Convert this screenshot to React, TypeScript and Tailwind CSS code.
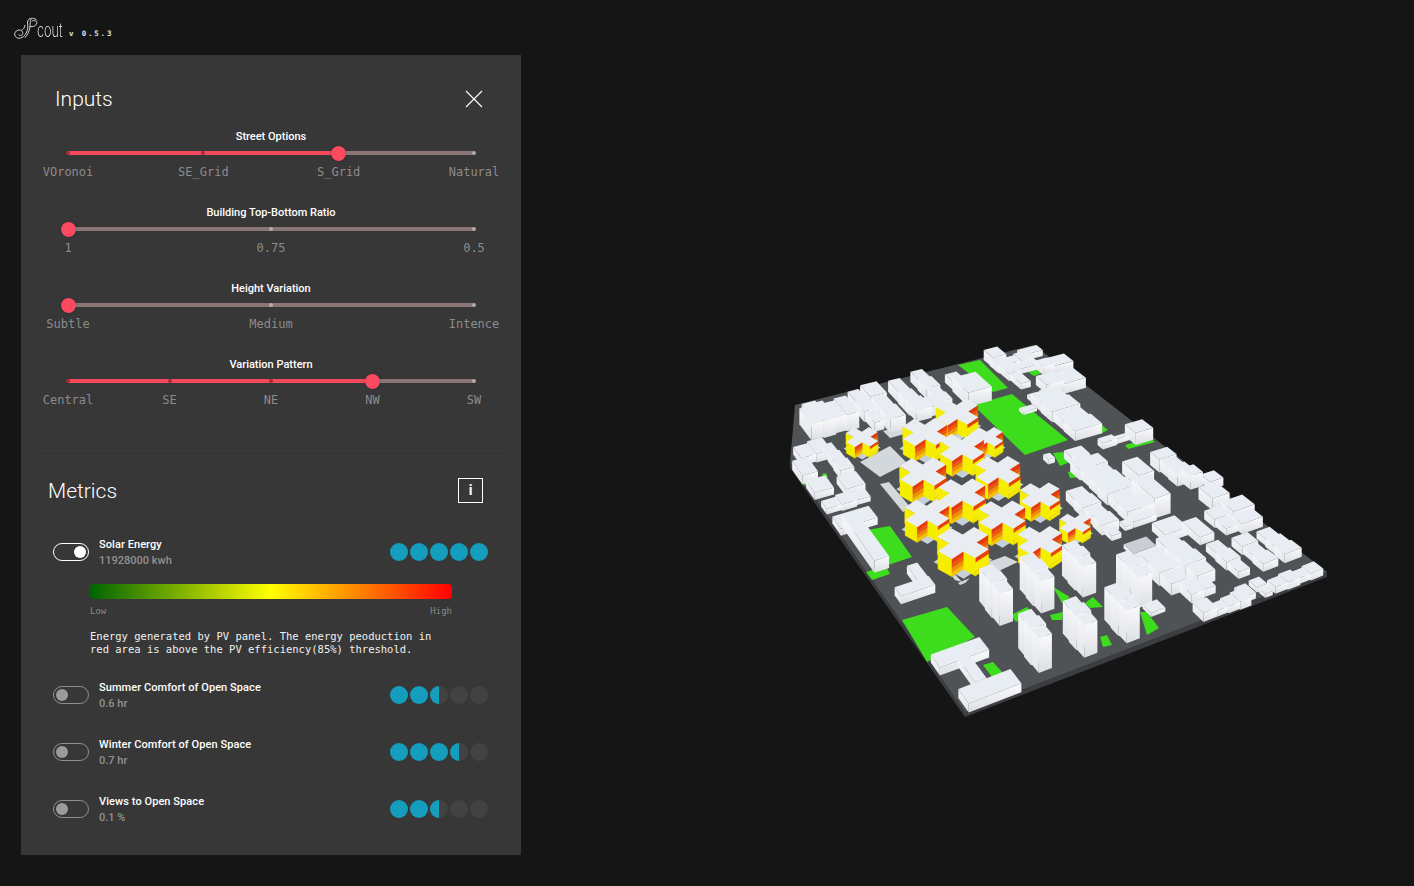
import type { ReactNode } from "react";

// ---------- map projection ----------
type Pt = [number, number];

// corners of the ground plane on screen (u along back edge, v along side edge)
const [P0, P1, P2, P3]: Pt[] = [[757, 414], [1034, 345], [1327, 572], [965, 712]];
const sx = P0[0] - P1[0] + P2[0] - P3[0];
const sy = P0[1] - P1[1] + P2[1] - P3[1];
const dx1 = P1[0] - P2[0];
const dx2 = P3[0] - P2[0];
const dy1 = P1[1] - P2[1];
const dy2 = P3[1] - P2[1];
const den = dx1 * dy2 - dx2 * dy1;
const G = (sx * dy2 - dx2 * sy) / den;
const H = (dx1 * sy - sx * dy1) / den;
const A = P1[0] - P0[0] + G * P1[0];
const B = P3[0] - P0[0] + H * P3[0];
const D = P1[1] - P0[1] + G * P1[1];
const E = P3[1] - P0[1] + H * P3[1];

const project = (u: number, v: number): Pt => {
  const w = G * u + H * v + 1;
  return [(A * u + B * v + P0[0]) / w, (D * u + E * v + P0[1]) / w];
};

const unproject = (x: number, y: number): Pt => {
  const a = A - G * x;
  const b = B - H * x;
  const c = D - G * y;
  const d = E - H * y;
  const r1 = x - P0[0];
  const r2 = y - P0[1];
  const det = a * d - b * c;
  return [(r1 * d - b * r2) / det, (a * r2 - r1 * c) / det];
};

const pxPerU = (u: number, v: number) => {
  const p = project(u, v);
  const q = project(u + 0.01, v);
  return Math.hypot(q[0] - p[0], q[1] - p[1]) * 100;
};
const pxPerV = (u: number, v: number) => {
  const p = project(u, v);
  const q = project(u, v + 0.01);
  return Math.hypot(q[0] - p[0], q[1] - p[1]) * 100;
};

const pts = (list: Pt[]) => list.map((p) => `${p[0].toFixed(1)},${p[1].toFixed(1)}`).join(" ");

// ---------- map data (screen position of the roof centre, then size in px) ----------
const GREENS: number[][] = [
  [973, 405, 1012, 394, 1068, 440, 1025, 455],
  [958, 365, 980, 360, 1008, 388, 993, 392],
  [867, 530, 890, 526, 912, 557, 888, 565],
  [866, 572, 886, 566, 890, 574, 872, 580],
  [902, 620, 947, 607, 975, 637, 927, 662],
  [983, 665, 993, 662, 1003, 673, 992, 677],
  [1011, 615, 1027, 607, 1032, 612, 1016, 622],
  [1050, 615, 1063, 612, 1062, 620, 1052, 620],
  [1085, 603, 1093, 597, 1103, 607, 1090, 608],
  [1140, 612, 1147, 612, 1159, 628, 1147, 635],
  [1100, 637, 1107, 635, 1112, 645, 1103, 647],
  [1053, 587, 1070, 597, 1062, 603],
  [1125, 445, 1150, 438, 1155, 442, 1128, 449],
  [1090, 424, 1098, 422, 1108, 430, 1100, 434],
  [1053, 453, 1063, 452, 1070, 462, 1060, 466],
  [1068, 472, 1083, 468, 1083, 477, 1070, 478],
  [801, 481, 812, 476, 815, 482, 805, 486],
  [822, 474, 826, 473, 828, 477, 824, 478],
  [1028, 372, 1042, 367, 1047, 371, 1034, 376],
];

const PLOTS: number[][] = [
  [860, 462, 890, 446, 907, 463, 880, 477],
  [880, 484, 889, 482, 911, 508, 903, 512],
  [883, 431, 905, 425, 912, 432, 890, 438],
  [938, 559, 943, 561, 962, 582, 955, 580],
  [958, 583, 970, 578, 965, 583, 960, 585],
  [980, 565, 1005, 556, 1018, 562, 990, 575],
];

const CROSSES: number[][] = [
  [862, 437, 0.72],
  [957, 412, 0.95],
  [925, 432, 1],
  [987, 437, 0.72],
  [962, 447, 1],
  [923, 472, 1.05],
  [998, 470, 1],
  [962, 493, 1.05],
  [1040, 495, 0.9],
  [927, 513, 1],
  [1002, 515, 1.05],
  [963, 543, 1.15],
  [1040, 540, 1],
  [1075, 523, 0.7],
];

// x, y, w, d, h - long lumpy rows get cut into chunks unless the last flag is set
const BLOCKS: number[][] = [
  [829, 410, 48, 20, 16],
  [812, 407, 14, 12, 14],
  [866, 405, 12, 40, 10],
  [883, 400, 16, 44, 14],
  [905, 390, 14, 32, 12],
  [929, 383, 12, 36, 10],
  [926, 402, 30, 14, 10],
  [944, 396, 10, 10, 8],
  [972, 382, 24, 22, 14],
  [955, 377, 12, 12, 8],
  [995, 352, 14, 12, 10],
  [1012, 359, 36, 10, 6],
  [1027, 364, 22, 8, 5],
  [1015, 372, 12, 28, 7],
  [1030, 350, 20, 8, 6],
  [1045, 362, 12, 10, 8],
  [1058, 360, 22, 12, 8],
  [1050, 378, 18, 14, 9],
  [1068, 376, 24, 16, 10],
  [1028, 408, 14, 6, 3],
  [1034, 396, 8, 8, 4],
  [1048, 392, 10, 10, 6],
  [1066, 408, 28, 58, 10],
  [1114, 437, 28, 6, 6],
  [1139, 426, 18, 14, 12],
  [1077, 452, 18, 12, 8],
  [1084, 458, 12, 16, 8],
  [1049, 456, 7, 7, 5],
  [1112, 482, 28, 76, 10],
  [1138, 466, 16, 22, 12, 1],
  [1151, 486, 17, 30, 20, 1],
  [1172, 461, 16, 34, 12],
  [1192, 470, 13, 12, 14],
  [1212, 476, 14, 12, 8],
  [1214, 490, 18, 18, 12],
  [1238, 503, 22, 16, 10],
  [1247, 516, 22, 14, 10],
  [1092, 505, 18, 50, 10],
  [1142, 515, 24, 9, 6],
  [1126, 523, 8, 8, 4],
  [1113, 531, 10, 10, 5],
  [1170, 525, 24, 18, 8],
  [1198, 527, 15, 24, 8],
  [1222, 517, 15, 26, 8],
  [1185, 553, 20, 56, 12],
  [1164, 565, 20, 44, 12],
  [1198, 585, 26, 15, 8],
  [1228, 555, 14, 42, 8],
  [1255, 548, 16, 40, 8],
  [1278, 540, 16, 38, 8],
  [1258, 582, 11, 11, 5],
  [1266, 590, 8, 8, 4],
  [1295, 574, 50, 12, 7],
  [1205, 605, 15, 15, 9],
  [1230, 600, 34, 12, 7],
  [1245, 590, 12, 14, 6],
  [1154, 606, 15, 12, 4],
  [812, 448, 30, 15, 8],
  [805, 466, 16, 18, 9],
  [837, 456, 12, 34, 8],
  [851, 480, 20, 16, 7],
  [820, 484, 20, 15, 7],
  [846, 498, 45, 11, 6],
  [855, 517, 38, 15, 7, 1],
  [865, 535, 15, 56, 12, 1],
  [918, 572, 11, 20, 8, 1],
  [915, 586, 36, 11, 8, 1],
  [960, 652, 52, 16, 8, 1],
  [972, 668, 12, 30, 8, 1],
  [990, 686, 56, 18, 9, 1],
];

// ribbed high-rises: x, y, w, d, h
const TOWERS: number[][] = [
  [996, 577, 16, 32, 34],
  [1037, 565, 16, 32, 34],
  [1035, 622, 16, 32, 36],
  [1080, 609, 16, 32, 34],
  [1079, 552, 16, 30, 32],
  [1122, 595, 16, 32, 34],
  [1134, 562, 16, 32, 32],
];

const LOW_BLOCK: number[] = [1140, 545, 24, 14, 4, 1];

// ---------- prism drawing ----------
type WallPaint = (nu: number, nv: number, au: number, av: number) => string[];

// footprint in local axes, clockwise; only the -a and +b faces turn to the camera
function prism(toScreen: (a: number, b: number) => Pt, fp: Pt[], h: number, roof: string, paint: WallPaint, key: string): ReactNode {
  const walls: { y: number; node: ReactNode }[] = [];
  fp.forEach((a, i) => {
    const b = fp[(i + 1) % fp.length];
    const nu = Math.sign(b[1] - a[1]);
    const nv = -Math.sign(b[0] - a[0]);
    if (!(nu < 0 || nv > 0)) return;
    const p = toScreen(a[0], a[1]);
    const q = toScreen(b[0], b[1]);
    const bands = paint(nu, nv, (a[0] + b[0]) / 2, (a[1] + b[1]) / 2);
    const node = bands.map((color, n) => {
      const t0 = h * (n / bands.length);
      const t1 = h * ((n + 1) / bands.length);
      return (
        <polygon
          key={n}
          fill={color}
          stroke={color.startsWith("url") ? "none" : color}
          strokeWidth={0.3}
          points={pts([
            [p[0], p[1] - t1],
            [q[0], q[1] - t1],
            [q[0], q[1] - t0],
            [p[0], p[1] - t0],
          ])}
        />
      );
    });
    walls.push({ y: (p[1] + q[1]) / 2, node: <g key={i}>{node}</g> });
  });
  walls.sort((m, n) => m.y - n.y);
  const top = fp.map((a) => {
    const p = toScreen(a[0], a[1]);
    return [p[0], p[1] - h] as Pt;
  });
  return (
    <g key={key}>
      {walls.map((w) => w.node)}
      <polygon points={pts(top)} fill={roof} />
    </g>
  );
}

const whitePaint: WallPaint = (nu) => (nu < 0 ? ["url(#wallL)"] : ["url(#wallR)"]);

function box(cu: number, cv: number, w: number, d: number, h: number, roof: string, key: string) {
  const hu = w / pxPerU(cu, cv) / 2;
  const hv = d / pxPerV(cu, cv) / 2;
  const fp: Pt[] = [[-hu, -hv], [hu, -hv], [hu, hv], [-hu, hv]];
  const g = project(cu, cv);
  return { y: g[1], node: prism((a, c) => project(cu + a, cv + c), fp, h, roof, whitePaint, key) };
}

const JITTER = [0, 2, -1, 1, -2];

// cut a long row into chunks so it reads lumpy like the massing model
function makeBlock(b: number[], i: number, roof = "#e8edf3") {
  const [x, y, w, d, h, solid] = b;
  const [cu, cv] = unproject(x, y + h);
  const long = Math.max(w, d);
  if (solid || long < 26) return [box(cu, cv, w, d, h, roof, `b${i}`)];
  const n = Math.round(long / 13);
  const alongV = d >= w;
  return Array.from({ length: n }, (_, k) => {
    const off = ((k + 0.5) / n - 0.5) * long;
    const du = alongV ? 0 : off / pxPerU(cu, cv);
    const dv = alongV ? off / pxPerV(cu, cv) : 0;
    const j = JITTER[(k + i) % 5];
    const size = long / n + 0.6;
    return box(
      cu + du,
      cv + dv,
      alongV ? w + j : size,
      alongV ? size : d + j,
      h + j * 0.5,
      roof,
      `b${i}-${k}`,
    );
  });
}

function makeTower(t: number[], i: number) {
  const [x, y, w, d, h] = t;
  const [cu, cv] = unproject(x, y + h);
  return [-1, 0, 1].map((k) => {
    const dv = (k * d) / 3 / pxPerV(cu, cv);
    return box(cu, cv + dv, w - (k === 0 ? 0 : 2), d / 3 + 0.5, h - (k === 0 ? 0 : 1.5), "#e8edf3", `t${i}-${k}`);
  });
}

// the cross towers sit a little rotated against the street grid
const crossAxes = (gx: number, gy: number) => (a: number, b: number): Pt => [
  gx + a * 0.83 + b * 0.87,
  gy - a * 0.55 + b * 0.49,
];

function makeCross(c: number[], i: number) {
  const [x, y, s] = c;
  const h = 15.5 * s;
  const L = 19 * s;
  const w = 7 * s;
  const fp: Pt[] = [
    [-w, -L], [w, -L], [w, -w], [L, -w], [L, w], [w, w],
    [w, L], [-w, L], [-w, w], [-L, w], [-L, -w], [-w, -w],
  ];
  const paint: WallPaint = (nu, _nv, _a, b) => {
    if (nu < 0) return ["#f6ee00"];
    if (b > w * 1.5) return ["#f5e600", "#f7ee00", "#f7ee00", "#e9400c"];
    return ["#f4c204", "#f09006", "#ea5a0a", "#e8380c"];
  };
  return { y: y + h, node: prism(crossAxes(x, y + h), fp, h, "#e9edf2", paint, `c${i}`) };
}

function CityMap() {
  const items = [
    ...BLOCKS.flatMap((b, i) => makeBlock(b, i)),
    ...TOWERS.flatMap(makeTower),
    ...makeBlock(LOW_BLOCK, 999, "#c9ced4"),
    ...CROSSES.map(makeCross),
  ];
  items.sort((a, b) => a.y - b.y);

  return (
    <svg className="block shrink-0" width={893} height={886} viewBox="521 0 893 886">
      <defs>
        <filter id="soft" x="-5%" y="-5%" width="110%" height="110%">
          <feGaussianBlur stdDeviation="0.55" />
        </filter>
        <linearGradient id="wallL" x1="0" y1="0" x2="0" y2="1">
          <stop offset="0" stopColor="#f6f7fa" />
          <stop offset="1" stopColor="#e2e4e9" />
        </linearGradient>
        <linearGradient id="wallR" x1="0" y1="0" x2="0" y2="1">
          <stop offset="0" stopColor="#fbfbfd" />
          <stop offset="1" stopColor="#dcdee3" />
        </linearGradient>
      </defs>
      <g filter="url(#soft)">
        <polygon points="790,463 965,712 1327,572 1327,577 965,717 790,468" fill="#3b3e41" />
        <polygon points="795,405 1034,345 1327,572 965,712 790,463" fill="#505355" />
        {GREENS.map((g, i) => (
          <polygon key={i} fill="#3ddc1f" points={g.join(" ")} />
        ))}
        {PLOTS.map((g, i) => (
          <polygon key={i} fill="#d3d8dc" points={g.join(" ")} />
        ))}
        {CROSSES.map((c, i) => {
          const gy = c[1] + 15.5 * c[2];
          const r = 15 * c[2];
          const at = crossAxes(c[0], gy);
          return <polygon key={i} fill="#c6d0d8" points={pts([at(-r, -r), at(r, -r), at(r, r), at(-r, r)])} />;
        })}
        {items.map((it) => it.node)}
      </g>
    </svg>
  );
}

// ---------- panel ----------
function Logo() {
  return (
    <div className="flex items-end h-[55px] pl-[14px] pb-[15px]">
      <svg width="24" height="23" viewBox="0 0 24 23" fill="none" stroke="#e4e4e4" strokeWidth="0.9" className="shrink-0">
        <path d="M23 3.5C21 0.8 16 0.4 14.2 3c-1.6 2.4 0.2 5.6-0.6 9.2-0.8 3.8-3 7.6-6.8 8.8C3.8 22 0.7 20 0.7 17.2c0-2.6 2.6-4.6 5.2-4.2 2.4 0.4 3.6 2.8 2.4 4.6-1 1.4-3 1.2-3.6-0.2" />
        <path d="M17.4 2c-1.8 1.8-1 5.4-1.6 8.8-0.6 3.6-2.4 7.4-5 10" />
        <path d="M15.8 9.6c3 0.4 6.8-0.8 7-3.6 0.2-2.2-3.2-3.4-5-1.6" />
        <path d="M7.6 13.4c1.8-1.2 3.4-3 3.2-5.4" />
      </svg>
      <span className="inline-block w-[26px] font-['Inter',sans-serif] font-extralight text-white text-[20px] leading-[19px] origin-left scale-x-[0.64] -ml-[1px]">
        cout
      </span>
      <span className="font-['DejaVu_Sans_Mono',monospace] font-bold text-[#e4e4e4] text-[7.5px] leading-[10px] tracking-[1.8px] ml-[6px] mb-[1px]">v 0.5.3</span>
    </div>
  );
}

interface SliderProps {
  title: string;
  stops: string[];
  value: number;
}

function Slider({ title, stops, value }: SliderProps) {
  const pct = (i: number) => (i / (stops.length - 1)) * 100;
  return (
    <div className="w-[406px] mx-auto">
      <p className="font-['Roboto',sans-serif] font-medium text-white text-[11px] leading-[18px] h-4 text-center">{title}</p>
      <div className="relative h-[18px]">
        <div className="absolute left-0 right-0 top-[7px] h-[4px] rounded-full bg-[#8a7676]" />
        <div className="absolute left-0 top-[7px] h-[4px] rounded-full bg-[#f2495c]" style={{ width: `${pct(value)}%` }} />
        {stops.map((s, i) => (
          <span
            key={s}
            className={`absolute top-[7px] w-[4px] h-[4px] -ml-[2px] rounded-full ${i < value ? "bg-[#a32c3c]" : "bg-[#b8aaaa]"}`}
            style={{ left: `${pct(i)}%` }}
          />
        ))}
        <span
          className="absolute top-[1.5px] w-[15px] h-[15px] -ml-[7.5px] rounded-full bg-[#fb4a60] shadow-[0_0_2px_rgba(0,0,0,0.4)]"
          style={{ left: `${pct(value)}%` }}
        />
      </div>
      <div className="relative h-5">
        {stops.map((s, i) => (
          <span
            key={s}
            className="absolute top-0 -translate-x-1/2 font-['DejaVu_Sans_Mono',monospace] text-[12px] leading-5 text-[#8c8c8c] whitespace-nowrap"
            style={{ left: `${pct(i)}%` }}
          >
            {s}
          </span>
        ))}
      </div>
    </div>
  );
}

function Toggle({ on }: { on: boolean }) {
  return (
    <div
      className={`relative w-9 h-[18px] rounded-full border shrink-0 ${on ? "border-white border-[1.5px]" : "border-[#8e8e8e]"}`}
    >
      <span
        className={`absolute top-1/2 -translate-y-1/2 w-3 h-3 rounded-full ${on ? "right-[2px] bg-white" : "left-[2px] bg-[#9b9b9b]"}`}
      />
    </div>
  );
}

function Dots({ score }: { score: number }) {
  return (
    <div className="flex gap-[2px] ml-auto">
      {[0, 1, 2, 3, 4].map((i) => (
        <div key={i} className="w-[18px] h-[18px] rounded-full bg-[#424242] overflow-hidden">
          <div className="h-full bg-[#159dbd]" style={{ width: `${Math.max(0, Math.min(1, score - i)) * 100}%` }} />
        </div>
      ))}
    </div>
  );
}

interface MetricProps {
  name: string;
  value: string;
  score: number;
  on?: boolean;
}

function MetricRow({ name, value, score, on = false }: MetricProps) {
  return (
    <div className="flex items-center h-8 pl-[32px] pr-[33px]">
      <Toggle on={on} />
      <div className="ml-[10px] pt-[2px]">
        <p className="font-['Roboto',sans-serif] font-medium text-white text-[11px] leading-4 tracking-[0.07px]">{name}</p>
        <p className="font-['Roboto',sans-serif] font-medium text-[#929292] text-[11px] leading-4">{value}</p>
      </div>
      <Dots score={score} />
    </div>
  );
}

export default function App() {
  return (
    <div className="flex w-[1414px] h-[886px] overflow-hidden bg-[#151515]">
      <div className="w-[521px] shrink-0">
        <Logo />
        <div className="ml-[21px] w-[500px] h-[800px] bg-[#373737] pt-[30px]">
          {/* Inputs */}
          <div className="flex items-center justify-between h-7 pl-[34px] pr-[38px]">
            <h2 className="font-['Roboto',sans-serif] font-light text-white text-[21px] leading-7">Inputs</h2>
            <svg width="18" height="18" viewBox="0 0 18 18" stroke="#ffffff" strokeWidth="1.1" fill="none">
              <path d="M1 1l16 16M17 1L1 17" />
            </svg>
          </div>
          <div className="flex flex-col gap-[22px] mt-[15px]">
            <Slider title="Street Options" stops={["VOronoi", "SE_Grid", "S_Grid", "Natural"]} value={2} />
            <Slider title="Building Top-Bottom Ratio" stops={["1", "0.75", "0.5"]} value={0} />
            <Slider title="Height Variation" stops={["Subtle", "Medium", "Intence"]} value={0} />
            <Slider title="Variation Pattern" stops={["Central", "SE", "NE", "NW", "SW"]} value={3} />
          </div>

          <div className="h-px bg-[#3d3d3d] mt-[40px] ml-[19px] mr-[16px]" />

          {/* Metrics */}
          <div className="flex items-center justify-between h-[25px] mt-[27px] pl-[27px] pr-[38px]">
            <h2 className="font-['Roboto',sans-serif] font-light text-white text-[21px] leading-7">Metrics</h2>
            <div className="w-[25px] h-[25px] border border-white flex items-center justify-center font-['Roboto',sans-serif] font-bold text-white text-[14px]">
              i
            </div>
          </div>

          <div className="mt-[33px]">
            <MetricRow name="Solar Energy" value="11928000 kwh" score={5} on />
          </div>
          <div className="ml-[69px] w-[362px] mt-[16px]">
            <div className="h-[15px] rounded-[4px] bg-[linear-gradient(90deg,#006400_0%,#ffff00_50%,#ff0000_100%)]" />
            <div className="flex justify-between mt-[6px] font-['DejaVu_Sans_Mono',monospace] text-[9px] leading-[12px] text-[#8a8a8a]">
              <span>Low</span>
              <span>High</span>
            </div>
            <p className="mt-[13px] font-['DejaVu_Sans_Mono',monospace] text-[10.5px] leading-[13px] text-[#f0f0f0] whitespace-pre-line">
              {"Energy generated by PV panel. The energy peoduction in\nred area is above the PV efficiency(85%) threshold."}
            </p>
          </div>

          <div className="flex flex-col gap-[25px] mt-[23px]">
            <MetricRow name="Summer Comfort of Open Space" value="0.6 hr" score={2.5} />
            <MetricRow name="Winter Comfort of Open Space" value="0.7 hr" score={3.5} />
            <MetricRow name="Views to Open Space" value="0.1 %" score={2.5} />
          </div>
        </div>
      </div>
      <CityMap />
    </div>
  );
}
